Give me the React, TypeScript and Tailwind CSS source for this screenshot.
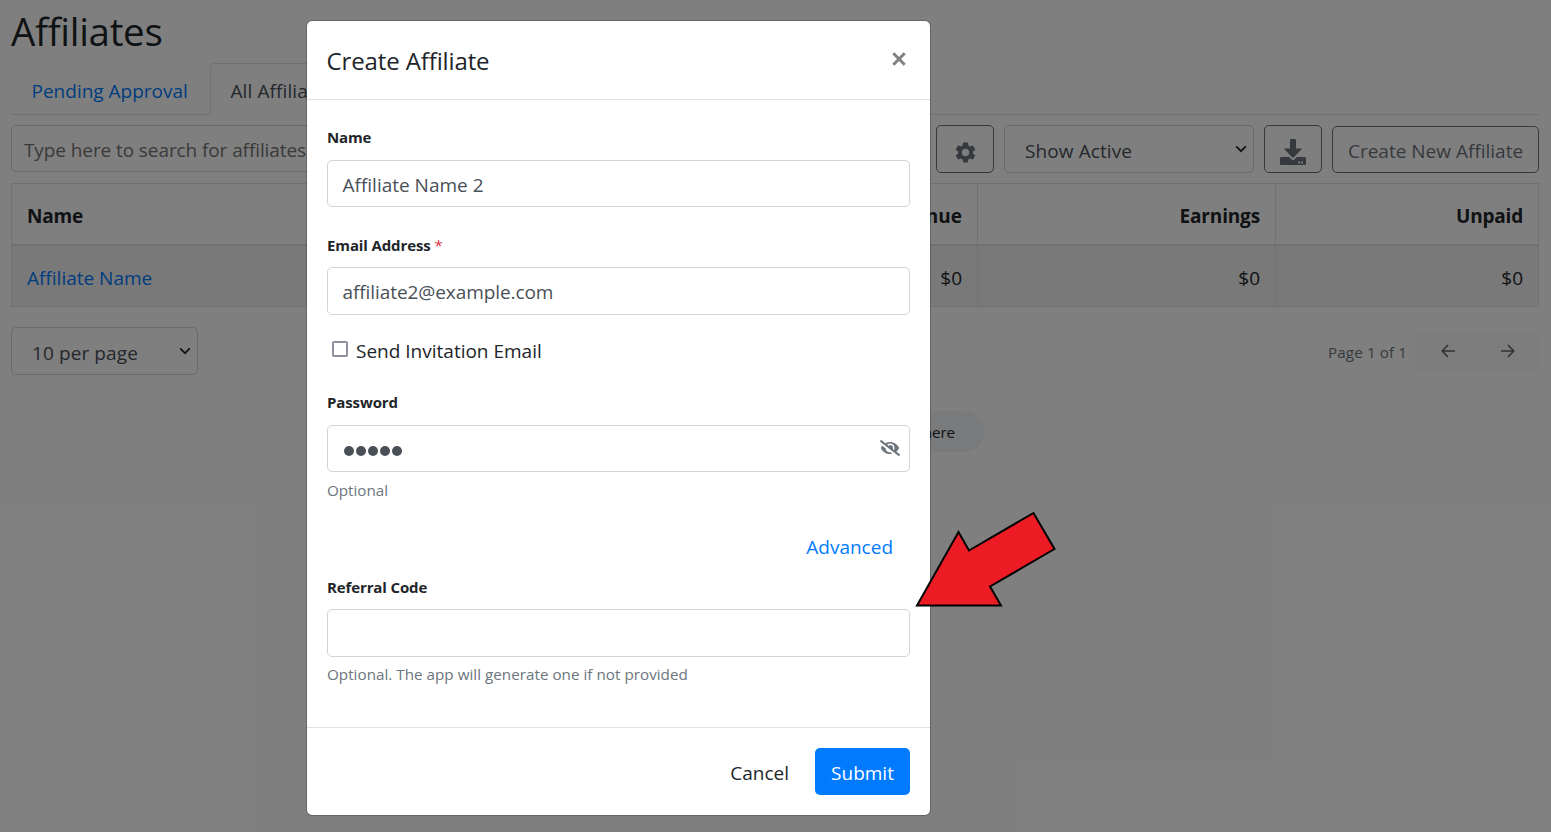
import type { ReactNode } from "react";
import { FaEyeSlash } from "react-icons/fa";
import { MdSettings } from "react-icons/md";

function Chevron() {
  return (
    <svg width="12" height="8" viewBox="0 0 12 8" fill="none" stroke="#212529" strokeWidth="1.7">
      <path d="M1.2 1.4 L6 6.2 L10.8 1.4" />
    </svg>
  );
}

function DownloadIcon() {
  return (
    <svg width="26" height="26" viewBox="0 0 26 26" fill="#6c757d">
      <path d="M10 1 Q10 0 11 0 H15 Q16 0 16 1 V9.5 H21 Q22.2 9.5 21.4 10.6 L13.6 18.4 Q13 19 12.4 18.4 L4.6 10.6 Q3.8 9.5 5 9.5 H10 Z" />
      <path d="M1 18 H9.2 L11.6 20.6 Q13 21.8 14.4 20.6 L16.8 18 H25 Q26 18 26 19 V25 Q26 26 25 26 H1 Q0 26 0 25 V19 Q0 18 1 18 Z" />
      <rect x="18" y="22.4" width="2" height="2" rx="0.6" fill="#fff" />
      <rect x="21" y="22.4" width="2" height="2" rx="0.6" fill="#fff" />
    </svg>
  );
}

function PageArrow({ flip = false }: { flip?: boolean }) {
  return (
    <svg
      width="14"
      height="14"
      viewBox="0 0 14 14"
      fill="none"
      stroke="#606468"
      strokeWidth="1.6"
      className={flip ? "-scale-x-100" : ""}
    >
      <path d="M14 7 H1.4 M7 1 L1.2 7 L7 13" />
    </svg>
  );
}

function Label({ children, className }: { children: ReactNode; className: string }) {
  return (
    <label className={`block h-5 text-[15px] leading-5 font-bold tracking-[-0.12px] text-[#212529] ${className}`}>
      {children}
    </label>
  );
}

function Field({ children, className }: { children?: ReactNode; className: string }) {
  return (
    <div
      className={`flex items-center rounded-[5px] border border-[#ced4da] pr-[9px] pl-[15px] text-[19px] text-[#495057] ${className}`}
    >
      {children}
    </div>
  );
}

function Page() {
  return (
    <div className="h-full pr-3 pl-[11px]">
      <h1 className="h-[63px] pt-[6px] text-[38.5px] leading-[50px] tracking-[-0.3px]">Affiliates</h1>

      <div className="flex h-[52px] border-b border-[#dee2e6] text-[19px]">
        <div className="w-[199px] pt-[15px] pl-[20.5px] leading-[27px] text-[#007bff]">Pending Approval</div>
        <div className="h-[52px] w-[160px] rounded-t-[5px] border border-b-0 border-[#dee2e6] bg-white pt-[14px] pl-[19.5px] leading-[27px] tracking-[0.1px] text-[#495057]">
          All Affiliates
        </div>
      </div>

      <div className="mt-[10px] flex h-12 gap-[10px] text-[19px]">
        <div className="h-[47px] flex-1 rounded-[5px] border border-[#ced4da] pl-3 leading-[49px] tracking-[-0.09px] text-[#757575]">
          Type here to search for affiliates
        </div>
        <button className="flex w-[58px] items-center justify-center rounded-[5px] border border-[#6c757d] pt-[6px] text-[#6c757d]">
          <MdSettings size={25} />
        </button>
        <div className="flex w-[250px] items-center justify-between rounded-[5px] border border-[#ced4da] pr-[6px] pl-5 text-[#495057]">
          <span className="pt-[5px] tracking-[0.1px]">Show Active</span>
          <Chevron />
        </div>
        <button className="flex w-[58px] items-center justify-center rounded-[5px] border border-[#6c757d] pt-[6px]">
          <DownloadIcon />
        </button>
        <button className="mt-px w-[207px] rounded-[5px] border border-[#6c757d] pt-1 text-center text-[#6c757d]">
          Create New Affiliate
        </button>
      </div>

      <table className="mt-[10px] w-full table-fixed border-separate border-spacing-0 border-t border-l border-[#dee2e6] text-[19px]">
        <colgroup>
          <col />
          <col className="w-[298px]" />
          <col className="w-[298px]" />
          <col className="w-[263px]" />
        </colgroup>
        <thead>
          <tr className="h-[62px] font-bold">
            <th className="border-r border-b-2 border-[#dee2e6] pt-1 pl-[15px] text-left tracking-[-0.2px]">Name</th>
            <th className="border-r border-b-2 border-[#dee2e6] pt-1 pr-[15px] text-right">Revenue</th>
            <th className="border-r border-b-2 border-[#dee2e6] pt-1 pr-[15px] text-right tracking-[-0.15px]">Earnings</th>
            <th className="border-r border-b-2 border-[#dee2e6] pt-1 pr-[15px] text-right tracking-[-0.2px]">Unpaid</th>
          </tr>
        </thead>
        <tbody>
          <tr className="h-[61px] bg-[#f2f2f2]">
            <td className="border-r border-b border-[#dee2e6] pt-1 pl-[15px] text-[#007bff]">Affiliate Name</td>
            <td className="border-r border-b border-[#dee2e6] pt-1 pr-[15px] text-right">$0</td>
            <td className="border-r border-b border-[#dee2e6] pt-1 pr-[15px] text-right">$0</td>
            <td className="border-r border-b border-[#dee2e6] pt-1 pr-[15px] text-right">$0</td>
          </tr>
        </tbody>
      </table>

      <div className="mt-5 flex h-12 items-start justify-between">
        <div className="flex h-12 w-[187px] items-center justify-between rounded-[5px] border border-[#ced4da] pr-[6px] pl-5 text-[19px] text-[#495057]">
          <span className="pt-[5px] tracking-[0.1px]">10 per page</span>
          <Chevron />
        </div>
        <div className="flex pt-[3px]">
          <span className="mr-[10px] pt-px text-[15.2px] leading-[42px] tracking-[0.1px] text-[#6c757d]">Page 1 of 1</span>
          <div className="flex h-[42px] w-[122px] items-center justify-between rounded-[5px] bg-[#fbfbfb] px-6">
            <PageArrow />
            <PageArrow flip />
          </div>
        </div>
      </div>

      <div className="mt-9 flex justify-center">
        <div className="h-[41px] w-[420px] rounded-full bg-[#f3f5f8] pr-[30px] text-right text-[15.2px] leading-[43px] tracking-[-0.1px]">
          Need help? Contact us here
        </div>
      </div>
    </div>
  );
}

function CreateAffiliateModal() {
  return (
    <div className="flex h-[796px] w-[625px] flex-col rounded-[6px] border border-black/20 bg-white bg-clip-padding">
      <div className="flex h-[79px] items-start justify-between border-b border-[#dee2e6] pr-6 pl-[19.5px]">
        <h5 className="pt-[22px] text-[24px] leading-9 tracking-[-0.12px]">Create Affiliate</h5>
        <svg className="mt-[31px]" width="14" height="14" viewBox="0 0 15 15" stroke="#808080" strokeWidth="3.2">
          <path d="M1.4 1.4 L13.6 13.6 M13.6 1.4 L1.4 13.6" />
        </svg>
      </div>

      <div className="flex h-[627px] flex-col px-5">
        <Label className="mt-[27px]">Name</Label>
        <Field className="mt-[13px] h-[47px] pt-1">
          <span className="-ml-[0.5px]">Affiliate Name 2</span>
        </Field>

        <Label className="mt-7">
          Email Address <span className="font-normal text-[#dc3545]">*</span>
        </Label>
        <Field className="mt-3 h-12 pt-[2px]">
          <span className="-ml-[0.5px] tracking-[-0.08px]">affiliate2@example.com</span>
        </Field>

        <div className="mt-[21px] flex h-[30px] items-start pl-[5px]">
          <span className="mt-[5px] size-4 rounded-[2px] border-2 border-[#8f8f9d]" />
          <span className="ml-2 text-[19px] leading-[30px]">Send Invitation Email</span>
        </div>

        <Label className="mt-[26px]">Password</Label>
        <Field className="mt-[13px] h-[47px] justify-between">
          <span className="flex gap-[2px] pt-[5px] pl-px">
            {[0, 1, 2, 3, 4].map((i) => (
              <span key={i} className="size-[10px] rounded-full bg-[#495057]" />
            ))}
          </span>
          <FaEyeSlash size={20} className="mb-[2px] text-[#6c757d]" />
        </Field>
        <div className="mt-[7px] text-[15.2px] leading-[22px] text-[#6c757d]">Optional</div>

        <a className="mt-[31px] pr-[17px] text-right text-[19px] leading-[30px] text-[#007bff]">Advanced</a>

        <Label className="mt-[15px]">Referral Code</Label>
        <Field className="mt-3 h-12" />
        <div className="mt-[6px] text-[15.2px] leading-[22px] tracking-[0.03px] text-[#6c757d]">
          Optional. The app will generate one if not provided
        </div>
      </div>

      <div className="flex flex-1 items-start justify-end border-t border-[#dee2e6] pt-5 pr-5 text-[19px] leading-[51px]">
        <button className="mr-[26px]">Cancel</button>
        <button className="h-[47px] w-[95px] rounded-[5px] bg-[#007bff] text-white">Submit</button>
      </div>
    </div>
  );
}

export default function App() {
  return (
    <div className="relative h-[832px] w-[1551px] overflow-hidden bg-white font-['Open_Sans',sans-serif] text-[#212529]">
      <Page />
      <div className="absolute inset-0 bg-black/50 pt-5 pl-[306px]">
        <CreateAffiliateModal />
      </div>
      <svg className="absolute top-[505px] left-[910px]" width="155" height="110" viewBox="910 505 155 110">
        <path
          d="M917 605.5 L958.5 532 L969 550.5 L1033.5 513 L1054.5 549 L990 586.5 L1001 605.5 Z"
          fill="#ed1c24"
          stroke="#000"
          strokeWidth="2"
        />
      </svg>
    </div>
  );
}
